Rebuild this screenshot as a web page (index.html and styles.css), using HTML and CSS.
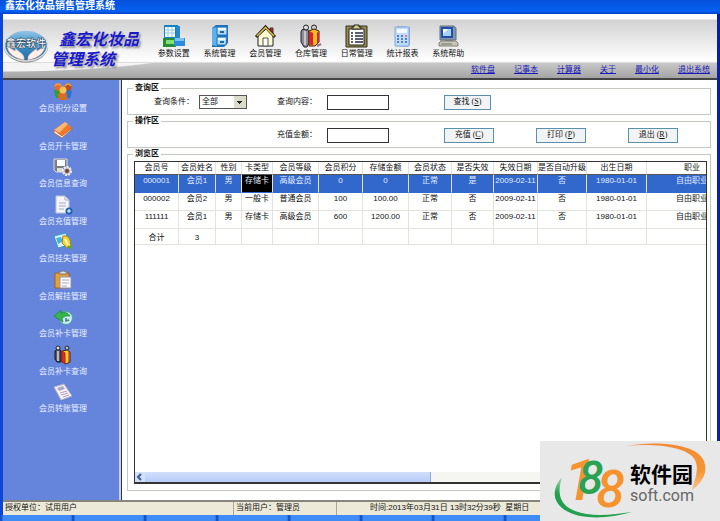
FILE: index.html
```html
<!DOCTYPE html>
<html lang="zh-CN">
<head>
<meta charset="utf-8">
<title>鑫宏化妆品销售管理系统</title>
<link rel="stylesheet" href="styles.css">
</head>
<body>
<div class="window">
  <div class="titlebar">鑫宏化妆品销售管理系统</div>
  <div class="frame">
    <header class="header">
      <div class="brand">
        <svg class="emblem" viewBox="0 0 46 34" aria-hidden="true">
          <defs><linearGradient id="em" x2="0" y2="1"><stop offset="0" stop-color="#9cc9e8"/><stop offset=".45" stop-color="#3f93cc"/><stop offset="1" stop-color="#1d6fa8"/></linearGradient></defs>
          <ellipse cx="23" cy="17.500" rx="22" ry="16" fill="#777"/>
          <ellipse cx="23" cy="16.500" rx="21.500" ry="15.500" fill="url(#em)" stroke="#ddd" stroke-width="1.500"/>
          <path d="M21 31C10 29 4 23 4 16l3 3 5 3 1-4-0 2 5 4q4 3 3 7zM25 31c11-2 17-8 17-15l-3 3-5 3-1-4 0 2-5 4q-4 3-3 7z" fill="#fff1ea" stroke="#e59b86" stroke-width=".5"/>
          <text x="23" y="18" text-anchor="middle" class="emblem-text">鑫宏软件</text>
        </svg>
        <h1 class="brand-name"><span>鑫宏化妆品</span><span>管理系统</span></h1>
      </div>
      <nav class="toolbar">
        <a href="#"><svg viewBox="0 0 24 24"><path d="M2 1h14v21H2z" fill="#1683c5"/><path d="M3 3h10v10H3z" fill="#f3fbff"/><path d="M3 6h10M3 9h10M6 3v10M10 3v10" stroke="#9dc9dc"/><path d="M14 2h4v13h-4z" fill="#2589c9"/><path d="M1 14h13v9H1z" fill="#258d34"/><path d="M4 16h8v4H4z" fill="#83df70"/><path d="M12 14h11v8H12z" fill="#2d8bde"/><path d="M13 14h9v3h-9z" fill="#7cc2f1"/></svg>参数设置</a>
        <a href="#"><svg viewBox="0 0 24 24"><path d="M4 4l4-3h12v18l-4 4H4z" fill="#1f72bd"/><path d="M4 4l5-1v19l-5-1z" fill="#5fb1ec"/><path d="M9 3h10v8H9zM9 13h10l-1 8H9z" fill="#afdcfa" stroke="#2770b4"/><path d="M10 4h8v2h-8zM10 14h7v2h-7z" fill="#eefaff"/><path d="M12 7h4v2h-4zM12 17h4v2h-4z" fill="#2b6297"/></svg>系统管理</a>
        <a href="#"><svg viewBox="0 0 24 24"><path d="M17 4h3v7h-3z" fill="#b22a20" stroke="#43332a"/><path d="M5 12v10h15V12l-7-7z" fill="#fff9d3" stroke="#222"/><path d="M3 13L12.500 3 22 13" fill="none" stroke="#28261a" stroke-width="3"/><path d="M4 12L12.500 3.500 21 12" fill="none" stroke="#e4c451" stroke-width="1.500"/><path d="M10 14h5v8h-5z" fill="#fff" stroke="#555"/></svg>会员管理</a>
        <a href="#"><svg viewBox="0 0 24 24"><path d="M2 8q0-3 4-3 4 0 4 3v11l-2 4H5l-3-5z" fill="#8c8c99" stroke="#222"/><circle cx="7" cy="3.500" r="2.500" fill="#ddd" stroke="#222"/><circle cx="15" cy="3.500" r="2.500" fill="#ccc" stroke="#222"/><path d="M10 7l5-2 5 2v11l-4 4h-6z" fill="#f7bd1f" stroke="#43200f"/><path d="M10 7l4 2v13l-4-2zM18 8l2 1v9l-2 3z" fill="#d9232b"/><path d="M6 7v14" stroke="#ddd" stroke-width="1.500"/><path d="M18 22l4-2" stroke="#99718c" stroke-width="2"/></svg>仓库管理</a>
        <a href="#"><svg viewBox="0 0 24 24"><path d="M1 2h21v21H1z" fill="#968c4b" stroke="#302e21"/><path d="M4 5h15v16H4z" fill="#fff" stroke="#222"/><path d="M7 5V3h2V1h5v2h2v2z" fill="#d7ce85" stroke="#222"/><path d="M6 9h2m2 0h8M6 12h2m2 0h8M6 15h2m2 0h8M6 18h2m2 0h8" stroke="#252940" stroke-width="1.500"/></svg>日常管理</a>
        <a href="#"><svg viewBox="0 0 24 24"><path d="M5 4l3-2 12 1v18l-3 2-12-1z" fill="#85aee5"/><path d="M5 3h14v19H5z" fill="#c2dbf8" stroke="#80a9dc"/><path d="M7 5h10v4H7z" fill="#f4faff"/><path d="M7 12h2m2 0h2m2 0h2M7 15h2m2 0h2m2 0h2M7 18h2m2 0h2m2 0h2" stroke="#537fc3" stroke-width="2"/><path d="M15 11h2v2h-2z" fill="#dc7892"/></svg>统计报表</a>
        <a href="#"><svg viewBox="0 0 24 24"><path d="M4 2h14l2 2v12H4z" fill="#8197a9" stroke="#607081"/><path d="M5 3h12v11H5z" fill="#224fae"/><path d="M7 5h8v7H7z" fill="#a5d4fb"/><path d="M7 5h5l-5 5z" fill="#fff"/><path d="M9 16h8v3H9z" fill="#707c80"/><path d="M3 19l2-2h15l2 2v3H3z" fill="#c9c6b5" stroke="#817f78"/><path d="M5 20h11" stroke="#6d7478"/></svg>系统帮助</a>
      </nav>
      <nav class="links">
        <a href="#">软件盘</a><a href="#">记事本</a><a href="#">计算器</a><a href="#">关于</a><a href="#">最小化</a><a href="#">退出系统</a>
      </nav>
    </header>
    <div class="body">
      <aside class="sidebar">
        <nav class="side-nav">
          <a href="#"><svg viewBox="0 0 20 20"><path d="M1 9q3-4 7 0v7H3z" fill="#329c39"/><path d="M12 8q5-2 7 2l-2 6h-5z" fill="#2972cf"/><path d="M5 12q5-5 9 0v6H6z" fill="#d86c25"/><circle cx="5" cy="5" r="3.500" fill="#ec6828"/><circle cx="15" cy="5" r="3.500" fill="#bc4c18"/><circle cx="10" cy="8" r="3.500" fill="#f9c052"/><path d="M2 4q3-4 6 0M12 4q3-4 6 0" stroke="#f5a22e" stroke-width="1.500" fill="none"/></svg>会员积分设置</a>
          <a href="#"><svg viewBox="0 0 20 20"><path d="M1 10L12 2l7 6-10 9z" fill="#f27a25"/><path d="M1 10L12 2l3 2-9 9z" fill="#ffb675"/><path d="M1 10v3l8 5 10-9V8L9 16z" fill="#fff0df" stroke="#b65323" stroke-width=".7"/></svg>会员开卡管理</a>
          <a href="#"><svg viewBox="0 0 20 20"><path d="M1 2h13v13H3l-2-2z" fill="#777f85" stroke="#ddd"/><path d="M4 3h8v6H4z" fill="#fff"/><path d="M4 11h6v4H4z" fill="#ddd"/><circle cx="14" cy="14" r="4" fill="#bbb" stroke="#eee" stroke-width="2" stroke-dasharray="2 1"/><circle cx="14" cy="14" r="2" fill="#763c39"/></svg>会员信息查询</a>
          <a href="#"><svg viewBox="0 0 20 20"><path d="M3 1h9l4 4v13H3z" fill="#f5f5f8" stroke="#bcc4d8"/><path d="M12 1v4h4M6 8h7M6 11h7M6 14h5" fill="none" stroke="#9ea9be"/><circle cx="16" cy="16" r="3.500" fill="#1763b4"/><path d="M16 14v4m-2-2h4" stroke="#fff"/></svg>会员充值管理</a>
          <a href="#"><svg viewBox="0 0 20 20"><path d="M1 4l12-3 3 12-11 3z" fill="#d9f4ff" stroke="#3697c8"/><path d="M3 6l5-1 2 4-5 3z" fill="#4bb2db"/><path d="M10 4q5-1 7 4l1 6-4 2-5-5z" fill="#f4d534" stroke="#98882c"/><path d="M12 7l3 6" stroke="#fff9c1" stroke-width="2"/><path d="M14 14l4 4 2-4z" fill="#5ba63c"/></svg>会员挂失管理</a>
          <a href="#"><svg viewBox="0 0 20 20"><path d="M2 3h14v15H2z" fill="#e4a13a" stroke="#a45f22"/><path d="M6 4V2h2V1h4v1h2v2z" fill="#e3e3e3" stroke="#777"/><path d="M7 7h11v11H7z" fill="#fbfbff" stroke="#9391a8"/><path d="M9 10h7M9 13h7M9 16h5" stroke="#aaa6bc"/></svg>会员解挂管理</a>
          <a href="#"><svg viewBox="0 0 20 20"><circle cx="13" cy="11" r="6.500" fill="#cdebf0" stroke="#43a693"/><path d="M1 9l7-6v3q6-2 9 3-4-1-8 2l1 4z" fill="#35b54b" stroke="#168737" stroke-width=".7"/><path d="M13 11v3l3-1" stroke="#3c7e89" stroke-width="1.500" fill="none"/></svg>会员补卡管理</a>
          <a href="#"><svg viewBox="0 0 20 20"><path d="M2 6q4-4 6 0v11H4l-2-3z" fill="#575760" stroke="#111"/><circle cx="5" cy="3" r="2" fill="#ddd" stroke="#222"/><circle cx="14" cy="3" r="2" fill="#bbb" stroke="#222"/><path d="M9 6l5-1 3 2v10l-4 2-4-2z" fill="#ffc92b" stroke="#48251a"/><path d="M9 6l3 2v10l-3-1zM16 7v10" fill="#e22b23" stroke="#b42119"/><path d="M5 6v10" stroke="#ddd" stroke-width="1.500"/></svg>会员补卡查询</a>
          <a href="#"><svg viewBox="0 0 20 20"><path d="M1 5l10-3 8 12-11 4z" fill="#f7f3fb" stroke="#aeb0c6"/><path d="M4 6l6-2 2 3-6 2z" fill="#a9a9c0"/><path d="M7 11l7-2M8 13l7-2M10 15l6-2" stroke="#b99bb4"/></svg>会员转账管理</a>
        </nav>
      </aside>
      <main class="main">
        <fieldset>
          <legend>查询区</legend>
          <div class="form-row">
            <div class="field"><label for="cond">查询条件：</label><select id="cond"><option>全部</option></select></div>
            <label for="content">查询内容：</label>
            <input type="text" id="content">
            <button type="button" class="short">查找<span class="key">(<u>S</u>)</span></button>
          </div>
        </fieldset>
        <fieldset>
          <legend>操作区</legend>
          <div class="form-row">
            <span></span>
            <label for="amount">充值金额：</label>
            <input type="text" id="amount">
            <button type="button">充值<span class="key">(<u>C</u>)</span></button>
            <button type="button">打印<span class="key">(<u>P</u>)</span></button>
            <button type="button">退出<span class="key">(<u>R</u>)</span></button>
          </div>
        </fieldset>
        <fieldset class="browse">
          <legend>浏览区</legend>
          <div class="grid-box">
            <div class="grid-view">
              <table>
                <colgroup><col class="w44"><col class="w37"><col class="w26"><col class="w31"><col class="w46"><col class="w44"><col class="w46"><col class="w43"><col class="w42"><col class="w44"><col class="w49"><col class="w60"><col class="w91"></colgroup>
                <thead><tr><th>会员号</th><th>会员姓名</th><th>性别</th><th>卡类型</th><th>会员等级</th><th>会员积分</th><th>存储金额</th><th>会员状态</th><th>是否失效</th><th>失效日期</th><th>是否自动升级</th><th>出生日期</th><th>职业</th></tr></thead>
                <tbody>
                  <tr class="selected"><td>000001</td><td>会员1</td><td>男</td><td class="current">存储卡</td><td>高级会员</td><td>0</td><td>0</td><td>正常</td><td>是</td><td>2009-02-11</td><td>否</td><td>1980-01-01</td><td>自由职业</td></tr>
                  <tr><td>000002</td><td>会员2</td><td>男</td><td>一般卡</td><td>普通会员</td><td>100</td><td>100.00</td><td>正常</td><td>否</td><td>2009-02-11</td><td>否</td><td>1980-01-01</td><td>自由职业</td></tr>
                  <tr><td>111111</td><td>会员1</td><td>男</td><td>存储卡</td><td>高级会员</td><td>600</td><td>1200.00</td><td>正常</td><td>否</td><td>2009-02-11</td><td>否</td><td>1980-01-01</td><td>自由职业</td></tr>
                  <tr class="total"><td>合计</td><td>3</td><td></td><td></td><td></td><td></td><td></td><td></td><td></td><td></td><td></td><td></td><td></td></tr>
                </tbody>
              </table>
            </div>
            <div class="scrollbar">
              <svg viewBox="0 0 10 10" aria-hidden="true"><path d="M6 2L3 5l3 3" fill="none" stroke="#3b5a90" stroke-width="2"/></svg>
              <div class="thumb"></div>
            </div>
          </div>
        </fieldset>
      </main>
    </div>
    <footer class="status">
      <div class="cell unit">授权单位：试用用户</div>
      <div class="cell user">当前用户：管理员</div>
      <div class="cell time">时间:2013年03月31日 13时32分39秒&nbsp; 星期日</div>
    </footer>
  </div>
  <div class="taskbar"></div>
</div>
<div class="watermark">
  <svg viewBox="0 0 180 80" aria-hidden="true">
    <defs>
      <linearGradient id="og" x2="0" y2="1"><stop offset="0" stop-color="#f08a35"/><stop offset=".6" stop-color="#f79633"/><stop offset="1" stop-color="#f9c48e"/></linearGradient>
      <linearGradient id="gg" x2="0" y2="1"><stop offset="0" stop-color="#a9d8b4"/><stop offset=".4" stop-color="#22a04d"/><stop offset="1" stop-color="#22a04d"/></linearGradient>
    </defs>
    <path d="M86 5C112 0 156 1 164 20 168 31 163 41 152 49c2-10 8-20 3-30C148 5 112 2 86 5z" fill="url(#og)"/>
    <path d="M22 36C8 52 14 69 40 75c17 3 34 1 52-4-20 3-42 5-57-1C17 63 18 49 22 36z" fill="url(#gg)"/>
    <text class="n1" x="24" y="59">1</text>
    <text class="n2" x="38" y="53">8</text>
    <text class="n3" x="56" y="66">8</text>
  </svg>
  <div class="mark-text"><strong>软件园</strong><span>soft.com</span></div>
</div>
</body>
</html>
```

FILE: styles.css
```css
* { box-sizing: border-box; }
body {
  margin: 0;
  font: 8px/12px "Liberation Sans", "Noto Sans CJK SC", sans-serif;
  color: #111;
}
a { color: inherit; text-decoration: none; }
.window { display: flex; flex-direction: column; min-height: 100vh; }
.titlebar {
  height: 14px;
  padding-left: 5px;
  background: linear-gradient(#0550d8, #0560f4 80%, #0340c4);
  color: #fff;
  font-size: 10px;
  font-weight: bold;
}
.frame {
  flex: 1;
  display: flex;
  flex-direction: column;
  border-left: 3px solid #0a46d8;
  border-right: 3px solid #0a1fa8;
}

/* Header */
.header {
  display: grid;
  grid-template-columns: 148px 320px 1fr;
  grid-template-rows: 49px 15px;
  height: 66px;
  border-bottom: 2px solid #444;
  background: linear-gradient(#fff 0 5px, #d2d2d2 6px, #fff 47px, #f4f4f4 48px, #c8c8c8 49px, #a4a4a4 64px);
}
.brand {
  grid-row: 1 / 3;
  display: flex;
  padding-top: 14px;
  background: radial-gradient(ellipse 220px 32px at 0 -23px, #f4f4f4 97%, transparent) left bottom / 100% 15px no-repeat;
}
.emblem { width: 46px; height: 36px; flex: none; }
.emblem-text { font-size: 10px; fill: #fff; stroke: #345; stroke-width: 1px; paint-order: stroke; }
.brand-name {
  margin: 0;
  padding-left: 2px;
  font: italic bold 16px/20px "Noto Sans CJK SC", sans-serif;
  color: #1a1acc;
  text-shadow: 2px 2px 2px #999;
}
.brand-name span { display: block; }
.brand-name span:first-child { padding-left: 8px; }
.toolbar { display: grid; grid-template-columns: repeat(7, 1fr); padding-top: 10px; text-align: center; }
.toolbar a { white-space: nowrap; }
.toolbar svg { display: block; width: 24px; height: 24px; margin: 0 auto; }
.links {
  grid-column: 3;
  grid-row: 2;
  display: flex;
  justify-content: space-between;
  padding: 1px 7px 0 0;
  color: #1a1ab8;
}
.links a { text-decoration: underline; }

/* Body */
.body { flex: 1; display: flex; }
.sidebar {
  width: 118px;
  padding-top: 2px;
  background: #6585dc;
  border-right: 2px solid #c9cfe4;
}
.side-nav {
  display: flex;
  flex-direction: column;
  justify-content: space-between;
  height: 80%;
  color: #e9eeff;
  text-align: center;
}
.side-nav a { line-height: 14px; padding-left: 4px; }
.side-nav svg { display: block; width: 20px; height: 20px; margin: 0 auto; }
.main {
  flex: 1;
  min-width: 0;
  display: flex;
  flex-direction: column;
  padding: 2px 6px 9px 5px;
  border-left: 1px solid #333;
  background: #fff;
}
fieldset { min-width: 0; height: 33px; margin: 0; padding: 0 0 0 26px; border: 1px solid #c4c9c0; }
legend { margin-left: -21px; padding: 0 2px; font-weight: bold; }
.form-row {
  display: grid;
  grid-template-columns: 123px 50px 117px 92px 92px 1fr;
  align-items: center;
  height: 16px;
  white-space: nowrap;
}
.field { display: grid; grid-template-columns: 45px 48px; align-items: center; }
input, select, button { font: inherit; color: inherit; margin: 0; border-radius: 0; }
input { width: 62px; height: 15px; padding: 0 2px; border: 1px solid #333; background: #fff; }
select {
  appearance: none;
  height: 14px;
  padding: 0 2px;
  border: 1px solid #555;
  background:
    conic-gradient(from -45deg at 50% 100%, #222 90deg, transparent 0) right 4px center / 6px 3px no-repeat,
    linear-gradient(#dcdccb, #dcdccb) right / 12px 100% no-repeat,
    #fff;
}
button {
  width: 50px;
  height: 15px;
  padding: 0;
  border: 1px solid #5b8fae;
  background: #f1f4f5;
}
button.short { width: 47px; }
.key { margin-left: 2px; font-family: "Liberation Serif", serif; }

/* Member table */
.browse { flex: 1; display: flex; flex-direction: column; height: auto; padding: 1px 3px 6px 6px; }
.browse legend { margin-left: -1px; }
.grid-box { display: flex; flex-direction: column; height: 100%; border: 1px solid #333; border-bottom-width: 2px; }
.grid-view { flex: 1; overflow: hidden; }
table { table-layout: fixed; width: 603px; border-collapse: separate; border-spacing: 0; text-align: center; white-space: nowrap; }
th, td { padding: 0; border-right: 1px solid #e3e3dc; }
th { height: 13px; border-bottom: 1px solid #555; font-weight: normal; }
td {
  height: 18px;
  vertical-align: top;
  border-bottom: 1px solid #e3e3dc;
}
.total td { height: 16px; vertical-align: bottom; }
.selected td { background: #3268cc; color: #e4ecff; border-bottom-color: #3268cc; }
.selected td.current { background: #000; }
.w26 { width: 26px; }
.w31 { width: 31px; }
.w37 { width: 37px; }
.w42 { width: 42px; }
.w43 { width: 43px; }
.w44 { width: 44px; }
.w46 { width: 46px; }
.w49 { width: 49px; }
.w60 { width: 60px; }
.w91 { width: 91px; }
.scrollbar { display: flex; height: 10px; background: #f5f5f2; }
.scrollbar svg { width: 10px; height: 10px; background: #d3e0fc; }
.thumb { width: 50%; border-right: 1px solid #8fa9e6; background: linear-gradient(#d2defd, #b8cbf8); }

/* Status bar */
.status {
  display: flex;
  height: 15px;
  border-top: 2px solid #85857b;
  background: #ece9d8;
  white-space: nowrap;
}
.cell { border-right: 1px solid #aaa797; padding-left: 2px; }
.unit { flex: 0 0 231px; }
.user { flex: 0 0 103px; }
.time { flex: 1; padding-left: 33px; border: 0; }
.taskbar { height: 6px; background: repeating-linear-gradient(90deg, #1553c8 0 2px, #3f8cf5 3px 70px, #2a6fe0 72px); }

/* Site mark */
.watermark {
  position: fixed;
  right: 0;
  bottom: 0;
  width: 180px;
  height: 80px;
  background: #e8e8e8;
}
.watermark svg { display: block; width: 180px; height: 80px; }
.watermark text { font-family: Roboto, sans-serif; font-style: italic; font-weight: 500; }
.n1 { font-size: 58px; fill: #f6932f; }
.n2 { font-size: 46px; fill: #2ba152; }
.n3 { font-size: 52px; fill: #f6932f; }
.mark-text { position: absolute; left: 90px; top: 22px; }
.mark-text strong { display: block; font-size: 21px; line-height: 24px; color: #000; }
.mark-text span { display: block; font: 16px/18px Roboto, sans-serif; color: #666; }
```
